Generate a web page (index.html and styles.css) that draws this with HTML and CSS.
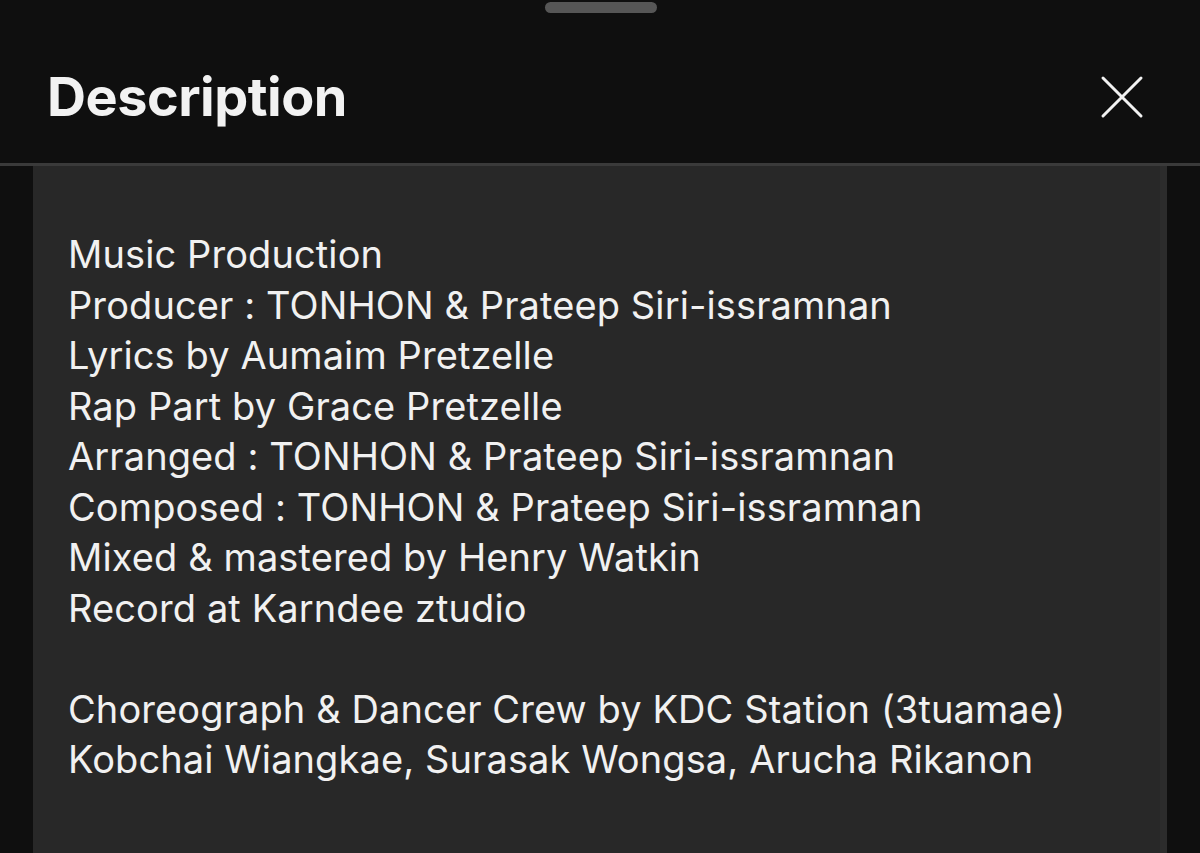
FILE: index.html
```html
<!DOCTYPE html>
<html>
<head>
<meta charset="utf-8">
<link rel="stylesheet" href="styles.css">
</head>
<body>
<div class="sheet">
  <div class="grab"></div>
  <header class="head">
    <h1 class="title">Description</h1>
    <button class="close" aria-label="Close">
      <svg width="44" height="44" viewBox="0 0 44 44"><path d="M3 3L41 41M41 3L3 41" stroke="#f2f2f2" stroke-width="3" stroke-linecap="round" fill="none"/></svg>
    </button>
  </header>
  <main class="panel">
    <div class="desc">
      <p>Music Production</p>
      <p>Producer : TONHON &amp; Prateep Siri-issramnan</p>
      <p>Lyrics by Aumaim Pretzelle</p>
      <p>Rap Part by Grace Pretzelle</p>
      <p>Arranged : TONHON &amp; Prateep Siri-issramnan</p>
      <p>Composed : TONHON &amp; Prateep Siri-issramnan</p>
      <p>Mixed &amp; mastered by Henry Watkin</p>
      <p>Record at Karndee ztudio</p>
      <p class="blank">&nbsp;</p>
      <p>Choreograph &amp; Dancer Crew by KDC Station (3tuamae)</p>
      <p>Kobchai Wiangkae, Surasak Wongsa, Arucha Rikanon</p>
    </div>
  </main>
</div>
</body>
</html>
```
FILE: styles.css
```css
html, body {
  margin: 0;
  padding: 0;
  background: #0f0f0f;
}
body {
  width: 1200px;
  height: 853px;
  overflow: hidden;
  font-family: Inter, "Noto Sans", sans-serif;
  color: #f1f1f1;
}
.sheet {
  position: relative;
  height: 853px;
  display: flex;
  flex-direction: column;
}
.grab {
  position: absolute;
  left: 545px;
  top: 2px;
  width: 112px;
  height: 11px;
  border-radius: 6px;
  background: #565656;
}
.head {
  flex: none;
  display: flex;
  align-items: center;
  justify-content: space-between;
  padding: 30px 56px 0 47px;
  border-bottom: 3px solid #3a3a3a;
  box-sizing: border-box;
  height: 166px;
}
.title {
  margin: 0;
  font-size: 54px;
  font-weight: 700;
  letter-spacing: -0.5px;
  color: #f2f2f2;
}
.close {
  background: none;
  border: 0;
  padding: 0;
  display: flex;
}
.panel {
  flex: 1;
  margin: 0 33px;
  background: #282828;
  border-right: 7px solid #2c2c2c;
  padding: 63px 35px 0;
}
.desc p {
  margin: 0;
  font-size: 38px;
  line-height: 50.5px;
  letter-spacing: 0.1px;
  color: #f1f1f1;
}
```
